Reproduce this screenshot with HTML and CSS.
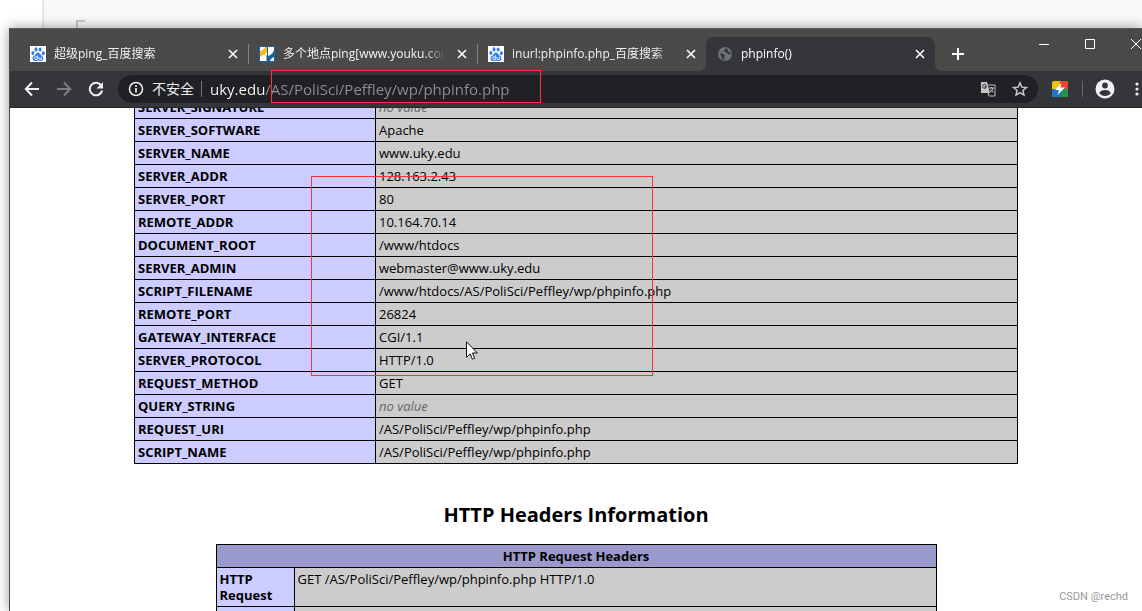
FILE: index.html
```html
<!DOCTYPE html>
<html lang="zh-CN">
<head>
<meta charset="utf-8">
<title>phpinfo()</title>
<link rel="stylesheet" href="styles.css">
</head>
<body>
<svg class="defs" aria-hidden="true">
  <symbol id="x" viewBox="0 0 10 10"><path d="M1 1l8 8M9 1l-8 8" stroke="currentColor" stroke-width="1.6" fill="none"/></symbol>
  <symbol id="paw" viewBox="0 0 16 16">
    <rect width="16" height="16" fill="#fff"/>
    <g fill="#2f7de8"><ellipse cx="2.8" cy="7" rx="1.5" ry="2"/><ellipse cx="6" cy="3.4" rx="1.5" ry="2.2"/><ellipse cx="10.1" cy="3.5" rx="1.5" ry="2.1"/><ellipse cx="13.3" cy="7.3" rx="1.5" ry="2"/>
    <path d="M8 6.6c1.5 0 2 1.5 3 2.500 1.200 1.200 2.800 2 2.400 4-.4 1.700-1.800 2.200-3.300 1.900-1.500-.2-2.700-.2-4.200 0-1.500.3-2.900-.2-3.300-1.900-.4-2 1.200-2.800 2.400-4 1-1 1.500-2.500 3-2.500z"/></g>
    <path d="M7.300 9.300v4.200H5.800q-1.200 0-1.200-1.300t1.200-1.300h1.500M8.900 10.900v1.700q0 .9 1 .9h1.400v-2.600" fill="none" stroke="#fff" stroke-width=".9"/>
  </symbol>
</svg>
<div class="desk"><i class="desk-corner"></i></div>
<div class="window">
  <header class="tabstrip">
    <div class="tab"><svg class="fav"><use href="#paw"/></svg><span class="title">超级ping_百度搜索</span><button class="close" aria-label="关闭"><svg><use href="#x"/></svg></button></div>
    <div class="tab"><svg class="fav" viewBox="0 0 16 16"><rect width="16" height="16" fill="#1763a0"/><path d="M1 1h7v14H1z" fill="#fff"/><path d="M1 9V5q4-1 5-4h2v5q-2 1-2 3H4L1 11z" fill="#f5b921"/><path d="M7 9h1v6H7z" fill="#8db36b"/><path d="M9 1h6v3q-1 4-6 6zM11 15q1-3 4-4v4z" fill="#fff"/></svg><span class="title">多个地点ping[www.youku.com]</span><button class="close" aria-label="关闭"><svg><use href="#x"/></svg></button></div>
    <div class="tab plain"><svg class="fav"><use href="#paw"/></svg><span class="title">inurl:phpinfo.php_百度搜索</span><button class="close" aria-label="关闭"><svg><use href="#x"/></svg></button></div>
    <div class="tab active"><svg class="fav" viewBox="0 0 16 16"><circle cx="8" cy="8" r="7" fill="#6e7175"/><path d="M2.500 7.500l4 .5 1.500 2-1 1.500.5 2.500L5 13 4.500 10.500zM9.500 2L7 4.500l1 1.800 2 .2.800 1.500 3 .5V6.500l-2.300-.5-.5-1.500z" fill="#35363a"/></svg><span class="title">phpinfo()</span><button class="close" aria-label="关闭"><svg><use href="#x"/></svg></button></div>
    <button class="newtab" aria-label="新标签页"><svg viewBox="0 0 12 12"><path d="M6 0v12M0 6h12" stroke="#fff" stroke-width="2"/></svg></button>
    <div class="controls">
      <button aria-label="最小化"><svg viewBox="0 0 10 10"><path d="M0 5.500h10" stroke="#fff"/></svg></button>
      <button aria-label="最大化"><svg viewBox="0 0 10 10"><path d="M.5.500h9v9h-9z" stroke="#fff" fill="none"/></svg></button>
      <button aria-label="关闭窗口"><svg viewBox="0 0 10 10"><path d="M0 0l10 10M10 0L0 10" stroke="#fff"/></svg></button>
    </div>
  </header>
  <nav class="toolbar">
    <button class="nav" aria-label="后退"><svg viewBox="0 0 16 16"><path d="M15 8H2M8 1.500L1.800 8 8 14.500" fill="none" stroke="#f1f1f1" stroke-width="2"/></svg></button>
    <button class="nav" aria-label="前进"><svg viewBox="0 0 16 16"><path d="M1 8h13M8 1.500L14.200 8 8 14.500" fill="none" stroke="#7d7e81" stroke-width="2"/></svg></button>
    <button class="nav" aria-label="重新加载"><svg viewBox="0 0 16 16"><path d="M13.300 4.500A6.300 6.300 0 1 0 14.200 9.500" fill="none" stroke="#f1f1f1" stroke-width="2"/><path d="M15 1v6.500H8.500z" fill="#f1f1f1"/></svg></button>
    <div class="omnibox">
      <svg class="info" viewBox="0 0 16 16"><circle cx="8" cy="8" r="6.500" fill="none" stroke="#eee" stroke-width="1.500"/><path d="M8 7v4.500M8 4.200v1.800" stroke="#eee" stroke-width="1.700"/></svg>
      <label class="security" for="url">不安全</label>
      <input class="url" id="url" type="text" value="uky.edu/AS/PoliSci/Peffley/wp/phpinfo.php">
      <button class="chip" aria-label="翻译"><svg viewBox="0 0 16 16"><path d="M6 4h9v11H9z" fill="none" stroke="#bbb"/><path d="M1 1h6l3 11H1z" fill="#c4c4c4"/><path d="M7 5.200H5v1.300h1.200A2 2 0 1 1 6 4" fill="none" stroke="#333" stroke-width="1"/><path d="M9 7h5M11.500 6v1M13 7q-.5 3-3 4M10.500 8.500l3 3" fill="none" stroke="#ccc"/></svg></button>
      <button class="chip" aria-label="收藏"><svg viewBox="0 0 16 16"><path d="M8 1.800l1.800 4.300 4.700.4-3.600 3 1.100 4.600L8 11.600l-4 2.500 1.100-4.600-3.600-3 4.700-.4z" fill="none" stroke="#ccc" stroke-width="1.400"/></svg></button>
    </div>
    <button class="ext" aria-label="扩展程序"><svg viewBox="0 0 16 16"><rect width="16" height="16" rx="2" fill="#f4c20d"/><path d="M8 0h6q2 0 2 2v6H8z" fill="#ea4335"/><path d="M8 8h8v6q0 2-2 2H8z" fill="#219653"/><path d="M0 8h8v8H2q-2 0-2-2z" fill="#2374c6"/><path d="M9.500 2L3 9h4l-1.500 5L13 6.500H8.500z" fill="#fff"/></svg></button>
    <i class="rule"></i>
    <button class="avatar" aria-label="用户"><svg viewBox="0 0 20 20"><circle cx="10" cy="10" r="9.500" fill="#f1f1f4"/><circle cx="10" cy="6.500" r="2.900" fill="#35363a"/><path d="M4.200 14q1.300-3 5.800-3t5.800 3q-2 3-5.800 3t-5.800-3z" fill="#35363a"/></svg></button>
    <button class="more" aria-label="菜单"><svg viewBox="0 0 4 16"><circle cx="2" cy="3" r="1.600" fill="#eee"/><circle cx="2" cy="8" r="1.600" fill="#eee"/><circle cx="2" cy="13" r="1.600" fill="#eee"/></svg></button>
  </nav>
  <main class="page">
    <table class="vars">
      <tr><th>SERVER_SIGNATURE</th><td><em>no value</em></td></tr>
      <tr><th>SERVER_SOFTWARE</th><td>Apache</td></tr>
      <tr><th>SERVER_NAME</th><td>www.uky.edu</td></tr>
      <tr><th>SERVER_ADDR</th><td>128.163.2.43</td></tr>
      <tr><th>SERVER_PORT</th><td>80</td></tr>
      <tr><th>REMOTE_ADDR</th><td>10.164.70.14</td></tr>
      <tr><th>DOCUMENT_ROOT</th><td>/www/htdocs</td></tr>
      <tr><th>SERVER_ADMIN</th><td>webmaster@www.uky.edu</td></tr>
      <tr><th>SCRIPT_FILENAME</th><td>/www/htdocs/AS/PoliSci/Peffley/wp/phpinfo.php</td></tr>
      <tr><th>REMOTE_PORT</th><td>26824</td></tr>
      <tr><th>GATEWAY_INTERFACE</th><td>CGI/1.1</td></tr>
      <tr><th>SERVER_PROTOCOL</th><td>HTTP/1.0</td></tr>
      <tr><th>REQUEST_METHOD</th><td>GET</td></tr>
      <tr><th>QUERY_STRING</th><td><em>no value</em></td></tr>
      <tr><th>REQUEST_URI</th><td>/AS/PoliSci/Peffley/wp/phpinfo.php</td></tr>
      <tr><th>SCRIPT_NAME</th><td>/AS/PoliSci/Peffley/wp/phpinfo.php</td></tr>
    </table>
    <h2>HTTP Headers Information</h2>
    <table class="headers">
      <tr><th class="head" colspan="2">HTTP Request Headers</th></tr>
      <tr><th>HTTP Request</th><td>GET /AS/PoliSci/Peffley/wp/phpinfo.php HTTP/1.0</td></tr>
      <tr><th>&nbsp;</th><td>&nbsp;</td></tr>
    </table>
  </main>
</div>
<div class="mark mark-url"></div>
<div class="mark mark-rows"></div>
<svg class="cursor" viewBox="0 0 12 19"><path d="M.5.800v15.500l3.600-3.400 2.300 5.300 2.300-1-2.300-5.200h5z" fill="#fff" stroke="#111"/></svg>
<span class="credit">CSDN @rechd</span>
</body>
</html>
```
FILE: styles.css
```css
* { box-sizing: border-box; }
body {
  margin: 0;
  height: 100vh;
  overflow: hidden;
  display: flex;
  flex-direction: column;
  position: relative;
  background: #fff;
  color: #000;
  font: 13px/16px "Open Sans", "Noto Sans CJK SC", sans-serif;
}
.defs { position: absolute; width: 0; height: 0; }
button { border: 0; padding: 0; background: none; color: #fff; display: grid; place-items: center; flex: none; }
svg { display: block; }

.desk { height: 28px; flex: none; margin-left: 42px; border-left: 2px solid #e6e6e6; background: #f9f9f9; padding: 20px 0 0 32px; }
.desk-corner { display: block; width: 9px; height: 8px; border: solid #c8c8c8; border-width: 2px 0 0 2px; }

.window { flex: 1; min-height: 0; margin-left: 9px; border-left: 1px solid #4a4a4a; display: flex; flex-direction: column; box-shadow: 0 0 12px rgba(0, 0, 0, .4); }

.tabstrip { height: 43px; flex: none; display: flex; align-items: flex-end; padding-left: 9px; background: #4c4a48; border-top: 1px solid #5c5a58; overflow: hidden; }
.tab { flex: 0 1 229px; min-width: 0; height: 34px; display: flex; align-items: center; gap: 8px; padding: 0 10px 0 11px; color: #f1f1f1; position: relative; }
.tab:not(.plain):not(.active)::after { content: ""; position: absolute; right: -1px; top: 7px; width: 1px; height: 20px; background: #858381; }
.fav { width: 16px; height: 16px; flex: none; }
.title { flex: 1; min-width: 0; margin-right: 4px; overflow: hidden; white-space: nowrap; font-size: 12px; line-height: 20px; mask-image: linear-gradient(90deg, #000 calc(100% - 20px), transparent); }
.close { width: 10px; height: 10px; }
.close svg { width: 10px; height: 10px; }
.active { background: #35363a; border-radius: 8px 8px 0 0; color: #fff; }
.active::before, .active::after { content: ""; position: absolute; bottom: 0; width: 8px; height: 8px; }
.active::before { right: 100%; background: radial-gradient(circle at 0 0, transparent 8px, #35363a 8px); }
.active::after { left: 100%; background: radial-gradient(circle at 100% 0, transparent 8px, #35363a 8px); }
.newtab { width: 28px; height: 34px; margin-left: 9px; }
.newtab svg { width: 12px; height: 12px; }
.controls { display: flex; flex: none; align-self: flex-start; margin: 0 -17px 0 auto; }
.controls button { width: 46px; height: 29px; }
.controls svg { width: 10px; height: 10px; }

.toolbar { height: 37px; flex: none; display: flex; align-items: center; padding-left: 14px; background: #35363a; border-bottom: 1px solid #242528; overflow: hidden; }
.nav { width: 16px; height: 16px; margin-right: 16px; }
.nav:nth-of-type(3) { margin-right: 14px; }
.nav svg, .info, .chip svg, .ext svg { width: 16px; height: 16px; }
.omnibox { flex: 1; height: 28px; margin-right: 14px; padding: 0 10px; border-radius: 14px; background: #202124; display: flex; align-items: center; gap: 8px; min-width: 0; }
.info { flex: none; }
.security { color: #eee; font-size: 14px; flex: none; padding-right: 7px; border-right: 1px solid #777; }
.url { flex: 1; min-width: 0; border: 0; padding: 0; outline: 0; font: 15px/22px "Open Sans", sans-serif; color: transparent; background: linear-gradient(90deg, #fff 55px, #8f9092 55px); -webkit-background-clip: text; background-clip: text; }
.chip { width: 16px; height: 16px; margin-left: 8px; }
.ext { width: 16px; height: 16px; }
.rule { width: 1px; height: 16px; margin: 0 12px 0 14px; background: #67686b; }
.avatar svg { width: 20px; height: 20px; }
.more { width: 4px; margin: 0 3px 0 20px; }
.more svg { width: 4px; height: 16px; }

.page { flex: 1; min-height: 0; overflow: hidden; background: #fff; }
table { width: 100%; margin: 0 auto; border-collapse: collapse; table-layout: auto; }
.vars { max-width: 884px; margin-top: -13px; }
.headers { max-width: 721px; }
th, td { border: 1px solid #000; padding: 3px; text-align: left; vertical-align: top; background: #ccc; font-size: 13px; line-height: 16px; }
th { background: #ccf; font-weight: 700; }
.vars th { width: 241px; }
.headers th { width: 78px; }
.headers .head { width: auto; background: #99c; text-align: center; }
em { color: #666; }
h2 { margin: 36px 0 14px; font-size: 20px; line-height: 30px; text-align: center; }

.mark { position: absolute; border: 1px solid #f33; pointer-events: none; }
.mark-url { left: 271px; top: 70px; width: 270px; height: 33px; }
.mark-rows { left: 311px; top: 176px; width: 342px; height: 200px; }
.cursor { position: absolute; left: 466px; top: 341px; width: 12px; height: 19px; }
.credit { position: absolute; right: 14px; bottom: 6px; color: #999; font: 11px/16px Roboto, sans-serif; }
```
